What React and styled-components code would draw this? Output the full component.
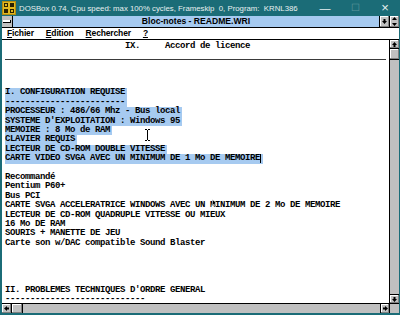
import React from 'react';
import styled, { createGlobalStyle } from 'styled-components';

const GlobalStyle = createGlobalStyle`
  html, body {
    margin: 0;
    padding: 0;
    background: #1b6c77;
  }
`;

const Frame = styled.div`
  width: 400px;
  height: 315px;
  display: flex;
  flex-direction: column;
  background: #1b6c77;
  overflow: hidden;
`;

const TitleBar = styled.div`
  height: 16px;
  display: flex;
  align-items: center;
  padding-left: 2px;
  color: #e8f0f0;
  font-family: "Liberation Sans", Arial, sans-serif;
  font-size: 7.8px;
  white-space: pre;
`;

const TitleText = styled.span`
  margin-left: 3px;
  flex: 1;
  min-width: 0;
  overflow: hidden;
`;

const Ctrl = styled.span`
  width: 30px;
  flex: none;
  text-align: center;
  font-size: ${p => p.$size || 11}px;
  color: ${p => (p.$dim ? '#5f979e' : '#e8f0f0')};
  line-height: 16px;
`;

const Win = styled.div`
  flex: 1;
  display: flex;
  flex-direction: column;
  margin: 0 1px 2px 2px;
  background: #fff;
  min-height: 0;
`;

const Caption = styled.div`
  height: 11px;
  display: flex;
  background: #a6caf0;
  border-bottom: 1px solid #000;
`;

const SysBox = styled.div`
  width: 10px;
  background: #c0c0c0;
  border-right: 1px solid #000;
  display: flex;
  align-items: center;
  justify-content: center;
  &::before {
    content: '';
    width: 7px;
    height: 2px;
    background: #fff;
    border-bottom: 1px solid #000;
    border-right: 1px solid #000;
  }
`;

const CaptionTitle = styled.div`
  flex: 1;
  text-align: center;
  font-family: "Liberation Sans", Arial, sans-serif;
  font-weight: bold;
  font-size: 8.6px;
  line-height: 11px;
  color: #000;
`;

const CapBtn = styled.div`
  width: 9px;
  background: #c0c0c0;
  border-left: 1px solid #000;
  box-shadow: inset -1px -1px 0 #808080, inset 1px 1px 0 #fff;
  display: flex;
  align-items: center;
  justify-content: center;
`;

const MenuBar = styled.div`
  height: 11px;
  display: flex;
  gap: 12px;
  padding-left: 5px;
  border-bottom: 1px solid #000;
  font-family: "Liberation Sans", Arial, sans-serif;
  font-weight: bold;
  font-size: 8.5px;
  letter-spacing: -0.15px;
  line-height: 11px;
  color: #000;
`;

const MenuItem = styled.span`
  & u {
    text-decoration-thickness: 1px;
    text-underline-offset: 1px;
  }
`;

const Body = styled.div`
  flex: 1;
  min-height: 0;
  display: grid;
  grid-template-columns: 1fr 10px;
  grid-template-rows: 1fr 10px;
`;

const Doc = styled.div`
  position: relative;
  padding: 1.5px 0 0 3px;
  overflow: hidden;
  font-family: "Liberation Mono", "Courier New", monospace;
  font-weight: bold;
  font-size: 9px;
  letter-spacing: -0.4px;
  line-height: 9.4px;
  color: #000;
`;

const Line = styled.div`
  height: 9.4px;
  white-space: pre;
  width: fit-content;
  padding-right: ${p => (p.$sel ? 2 : 0)}px;
  background: ${p => (p.$sel ? '#a6caf0' : 'transparent')};
`;

const Rule = styled.div`
  height: 8.4px;
  margin-right: 3px;
  border-bottom: 1px solid #3a3a3a;
`;

const Caret = styled.span`
  display: inline-block;
  width: 1px;
  height: 9px;
  background: #000;
  vertical-align: top;
`;

const Cursor = styled.svg`
  position: absolute;
  left: ${p => p.$x}px;
  top: ${p => p.$y}px;
`;

const VScroll = styled.div`
  display: flex;
  flex-direction: column;
  background: #c0c0c0;
  border-left: 1px solid #000;
`;

const Arrow = styled.div`
  height: ${p => p.$h || 8}px;
  width: ${p => p.$w || 'auto'};
  flex: none;
  background: #c0c0c0;
  box-shadow: inset -1px -1px 0 #808080, inset 1px 1px 0 #fff;
  border-${p => p.$side}: 1px solid #000;
  display: flex;
  align-items: center;
  justify-content: center;
`;

const Track = styled.div`
  flex: 1;
  background: #c0c0c0;
`;

const HScroll = styled.div`
  display: flex;
  background: #c0c0c0;
  border-top: 1px solid #000;
`;

const Corner = styled.div`
  background: #c0c0c0;
  border-top: 1px solid #000;
  border-left: 1px solid #000;
`;

const Tri = ({ dir }) => {
  const paths = {
    up: 'M3.5 1 L6 4 L4.5 4 L4.5 6 L2.5 6 L2.5 4 L1 4 Z',
    down: 'M3.5 6 L6 3 L4.5 3 L4.5 1 L2.5 1 L2.5 3 L1 3 Z',
    left: 'M1 3.5 L4 1 L4 2.5 L6 2.5 L6 4.5 L4 4.5 L4 6 Z',
    right: 'M6 3.5 L3 1 L3 2.5 L1 2.5 L1 4.5 L3 4.5 L3 6 Z',
  };
  return (
    <svg width="7" height="7" viewBox="0 0 7 7">
      <path d={paths[dir]} fill="#000" />
    </svg>
  );
};

const DosIcon = () => (
  <svg width="14" height="14" viewBox="0 0 14 14">
    <rect x="0" y="0" width="14" height="14" fill="#b08a10" />
    <rect x="1" y="1" width="12" height="12" fill="#e0b820" />
    <rect x="2" y="2" width="4" height="4" fill="#2a2000" />
    <rect x="8" y="2" width="4" height="4" fill="#2a2000" />
    <rect x="2" y="8" width="4" height="4" fill="#2a2000" />
    <rect x="8" y="8" width="4" height="4" fill="#2a2000" />
    <rect x="3" y="3" width="2" height="2" fill="#e0b820" />
    <rect x="9" y="9" width="2" height="2" fill="#e0b820" />
  </svg>
);

const selected = [
  'I. CONFIGURATION REQUISE',
  '------------------------',
  'PROCESSEUR : 486/66 Mhz - Bus local',
  "SYSTEME D'EXPLOITATION : Windows 95",
  'MEMOIRE : 8 Mo de RAM',
  'CLAVIER REQUIS',
  'LECTEUR DE CD-ROM DOUBLE VITESSE',
];

const rest = [
  '',
  'Recommandé',
  'Pentium P60+',
  'Bus PCI',
  'CARTE SVGA ACCELERATRICE WINDOWS AVEC UN MINIMUM DE 2 Mo DE MEMOIRE',
  'LECTEUR DE CD-ROM QUADRUPLE VITESSE OU MIEUX',
  '16 Mo DE RAM',
  'SOURIS + MANETTE DE JEU',
  'Carte son w/DAC compatible Sound Blaster',
  '',
  '',
  '',
  '',
  "II. PROBLEMES TECHNIQUES D'ORDRE GENERAL",
  '----------------------------',
];

export default function App() {
  return (
    <>
      <GlobalStyle />
      <Frame>
        <TitleBar>
          <DosIcon />
          <TitleText>DOSBox 0.74, Cpu speed: max 100% cycles, Frameskip  0, Program:  KRNL386</TitleText>
          <Ctrl>—</Ctrl>
          <Ctrl $dim $size={10}>☐</Ctrl>
          <Ctrl $size={13}>×</Ctrl>
        </TitleBar>
        <Win>
          <Caption>
            <SysBox />
            <CaptionTitle>Bloc-notes - README.WRI</CaptionTitle>
            <CapBtn><Tri dir="down" /></CapBtn>
            <CapBtn>
              <svg width="7" height="9" viewBox="0 0 7 9">
                <path d="M3.5 0 L6 3 L1 3 Z M3.5 9 L6 6 L1 6 Z" fill="#000" />
              </svg>
            </CapBtn>
          </Caption>
          <MenuBar>
            <MenuItem><u>F</u>ichier</MenuItem>
            <MenuItem><u>E</u>dition</MenuItem>
            <MenuItem><u>R</u>echercher</MenuItem>
            <MenuItem><u>?</u></MenuItem>
          </MenuBar>
          <Body>
            <Doc>
              <Line>{'                        IX.     Accord de licence'}</Line>
              <Rule />
              <Line />
              <Line />
              <Line />
              {selected.map((t, i) => (
                <Line key={i} $sel>{t}</Line>
              ))}
              <Line $sel>
                CARTE VIDEO SVGA AVEC UN MINIMUM DE 1 Mo DE MEMOIRE<Caret />
              </Line>
              {rest.map((t, i) => (
                <Line key={'r' + i}>{t}</Line>
              ))}
              <Cursor $x={142} $y={89} width="7" height="12" viewBox="0 0 7 12">
                <path d="M1 0.5 H3 M4 0.5 H6 M3.5 1 V11 M1 11.5 H3 M4 11.5 H6" stroke="#000" strokeWidth="1" fill="none" />
              </Cursor>
              <Cursor $x={210} $y={159} width="5" height="8" viewBox="0 0 5 8">
                <path d="M0.5 0.5 L0.5 6.5 L2 5 L3 7.5 L4 7 L3 4.5 L4.5 4.5 Z" fill="#000" stroke="#fff" strokeWidth="0.5" />
              </Cursor>
            </Doc>
            <VScroll>
              <Arrow $side="bottom"><Tri dir="up" /></Arrow>
              <Arrow $h={10} $side="bottom" />
              <Track />
              <Arrow $side="top"><Tri dir="down" /></Arrow>
            </VScroll>
            <HScroll>
              <Arrow $h={9} $w="9px" $side="right"><Tri dir="left" /></Arrow>
              <Arrow $h={9} $w="10px" $side="right" />
              <Track />
              <Arrow $h={9} $w="8px" $side="left"><Tri dir="right" /></Arrow>
            </HScroll>
            <Corner />
          </Body>
        </Win>
      </Frame>
    </>
  );
}
